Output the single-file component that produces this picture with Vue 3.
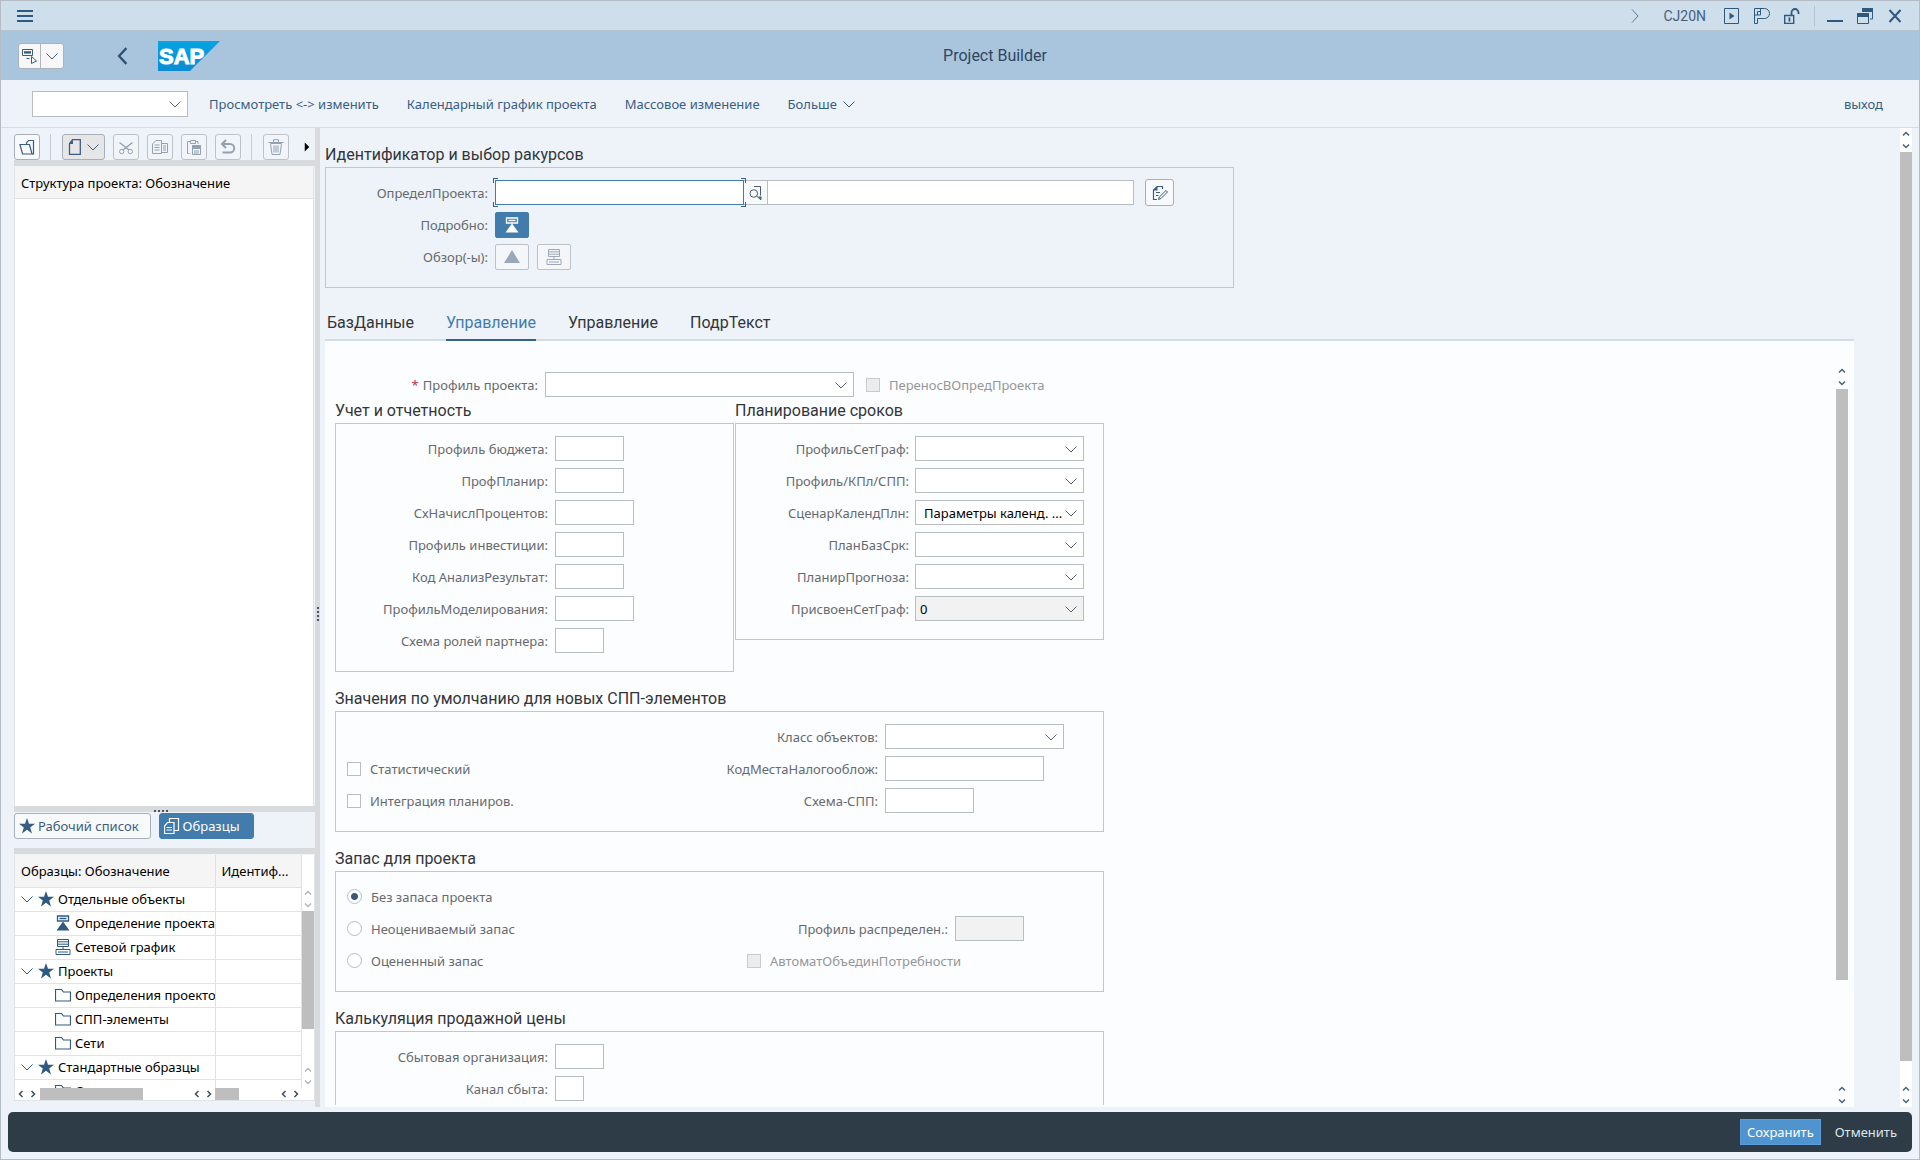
<script setup>
import { h, ref } from 'vue'

const S = (d, w = 1) => ({ d, fill: 'none', stroke: 'currentColor', 'stroke-width': w })
const F = (d) => ({ d, fill: 'currentColor' })

const icons = {
  menu: [F('M0 2h16v2H0zM0 7h16v2H0zM0 12h16v2H0z')],
  down: [S('M2.5 5.5L8 11l5.500-5.500')],
  right: [S('M5 1.500L11 8l-6 6.500')],
  back: [S('M11 1L4.500 8l6.500 7', 2)],
  cursor: [S('M.5 1.500h10v6H.5z'), F('M2 3.200h7v2.400H2z'), S('M4.500 10.500h3'), S('M9.500 8.500l5 4.500-5 2.500z')],
  play: [S('M.5 .5h14v15H.5z'), F('M5.500 4.500v7l5-3.500z')],
  pshape: [S('M3.500 15.500H.5V.5h10a4.800 4.800 0 010 10H8M6.500 .5v6.500M.5 7h6M3.500 15.500v-5h4.500M6.500 3.500h-3v3.500')],
  lock: [S('M.7 7.500h9v8h-9z', 1.4), S('M7.500 7.500V4.500a3.500 3.500 0 017 0V6', 1.8), F('M4.500 9.500h1.800v4H4.500z')],
  minimize: [F('M0 12h16v2H0z')],
  restore: [F('M5 0h11v4H5z'), S('M15.500 3v8H13'), S('M.5 6.500h11v9H.5z'), F('M0 5h12v4H0z')],
  close: [S('M2.500 2l11 12M13.500 2l-11 12', 2)],
  openFolder: [S('M1 5.500h9.500L13 15H3.500z', 1.2), S('M7.500 5.500V4l2-2.500h5V15H13', 1.2)],
  page: [S('M5.500 .7h7.800v14.600H2.500V4.500z', 1.300), F('M2.500 5L6 .7V5z')],
  cut: [S('M1.500 3.500l9.500 7.500M14.500 3.500L5 11', 1.500), S('M1.500 12.500a2.200 2.200 0 104.400 0 2.200 2.200 0 10-4.400 0M10.100 12.500a2.200 2.200 0 104.400 0 2.200 2.200 0 10-4.400 0')],
  copyDoc: [S('M4 1.500h5.500v13H.5V5z'), S('M2.500 6h5M2.500 8.500h5M2.500 11h5M9.500 4.500h6v9h-6M11 7h3M11 9h3M11 11h3')],
  paste: [S('M3.500 14.500h-2v-12h3M10 2.500h2V5M4.500 1.500h5v3h-5z'), S('M6.500 6.500h8v9h-8z'), F('M6.500 6h8v4h-8zM8 11.500h5v1H8zM8 13.500h5v1H8z')],
  undo: [S('M6 1L2 5l4 4M2 5h8a4 4 0 010 8.500H2.500', 2)],
  trash: [S('M2.500 4.500h11L12 15.500H4zM0.500 3.500h15M5.500 3V.7h5V3M6 6.500v7M8 6.500v7M10 6.500v7')],
  triangle: [F('M8 1l8 13H0z')],
  project: [S('M2.500 1h11v5h-11zM4.500 3.500h7', 1.300), F('M8 6.500l6.500 9h-13z')],
  network: [S('M2.500 .5h11v7h-11zM2.500 2.800h11M2.500 5.200h11M8 7.500v3M1 10.500h14v5H1zM3 13h10')],
  help: [S('M2 8.500a3.800 3.800 0 107.600 0 3.800 3.800 0 10-7.600 0M8.800 11.200L13 15M6 1.500h6.500v9'), F('M10 11.500h3.500V15z')],
  edit: [S('M10.500 4V1.500H5L1.500 5v9.500h3.500M4 7.500h4M4 10.500h2.500', 1.200), F('M1.500 5.500L5.500 1v4.500z'), S('M14 5.500l1.500 1.500-6.500 6.500-2.500 1 .8-2.500z')],
  star: [F('M8 0l2 5.700h6l-4.800 3.700 1.800 6.100-5-3.700-5 3.700 1.800-6.100L0 5.700h6z')],
  folder: [S('M.5 2.500h6l2 2.500h7v9H.5z', 1.200)],
  copy: [S('M3.500 4.500H10v11H.5V8zM2.500 9.500h5.500M2.500 12h5.500M5.500 4.500V.5h9v12H10', 1.200)],
  up: [S('M4 10l4-4 4 4', 2)],
  dn: [S('M4 6l4 4 4-4', 2)],
  lt: [S('M10 4L6 8l4 4', 2)],
  rt: [S('M6 4l4 4-4 4', 2)],
  caret: [F('M5 2l6 6-6 6z')]
}
const Icon = (p) =>
  h('svg', { viewBox: '0 0 16 16', width: p.size || 16, height: p.size || 16, class: 'icon', 'aria-hidden': 'true' },
    icons[p.name].map((a) => h('path', a)))
Icon.props = ['name', 'size']

const account = [
  ['Профиль бюджета:', 'w70'],
  ['ПрофПланир:', 'w70'],
  ['СхНачислПроцентов:', 'w80'],
  ['Профиль инвестиции:', 'w70'],
  ['Код АнализРезультат:', 'w70'],
  ['ПрофильМоделирования:', 'w80'],
  ['Схема ролей партнера:', 'w50']
]
const dates = [
  { label: 'ПрофильСетГраф:', value: '' },
  { label: 'Профиль/КПл/СПП:', value: '' },
  { label: 'СценарКалендПлн:', value: 'Параметры календ. ...', cls: 'indent' },
  { label: 'ПланБазСрк:', value: '' },
  { label: 'ПланирПрогноза:', value: '' },
  { label: 'ПрисвоенСетГраф:', value: '0', cls: 'off', disabled: true }
]
const tree = [
  ['Отдельные объекты', 'star', 0],
  ['Определение проекта', 'project', 1],
  ['Сетевой график', 'network', 1],
  ['Проекты', 'star', 0],
  ['Определения проекто', 'folder', 1],
  ['СПП-элементы', 'folder', 1],
  ['Сети', 'folder', 1],
  ['Стандартные образцы', 'star', 0],
  ['Стандартные сети', 'folder', 1]
]
const tools = [['cut', 'Вырезать'], ['copyDoc', 'Копировать'], ['paste', 'Вставить'], ['undo', 'Отменить действие']]
const tabs = ['БазДанные', 'Управление', 'Управление', 'ПодрТекст']
const activeTab = ref(1)
const stock = ref('none')
</script>

<template>
  <div class="app">
    <header class="sysbar">
      <button class="ib" aria-label="Меню"><Icon name="menu" /></button>
      <div class="sys">
        <Icon name="right" class="soft" />
        <span class="tcode">CJ20N</span>
        <button class="ib" aria-label="Выполнить"><Icon name="play" /></button>
        <button class="ib" aria-label="Персонализация"><Icon name="pshape" /></button>
        <button class="ib" aria-label="Блокировка"><Icon name="lock" /></button>
        <i class="vline"></i>
        <button class="ib" aria-label="Свернуть"><Icon name="minimize" /></button>
        <button class="ib" aria-label="Восстановить"><Icon name="restore" /></button>
        <button class="ib" aria-label="Закрыть"><Icon name="close" /></button>
      </div>
    </header>

    <div class="titlebar">
      <div class="split">
        <button aria-label="Курсор"><Icon name="cursor" /></button>
        <button aria-label="Варианты"><Icon name="down" /></button>
      </div>
      <button class="ib back" aria-label="Назад"><Icon name="back" :size="18" /></button>
      <svg class="logo" viewBox="0 0 62 30" width="62" height="30" role="img" aria-label="SAP">
        <defs>
          <linearGradient id="sapg" x1="0" y1="0" x2="0" y2="1">
            <stop offset="0" stop-color="#04a4e4" /><stop offset="1" stop-color="#0b8bd2" />
          </linearGradient>
        </defs>
        <path d="M0 0h62L32 30H0z" fill="url(#sapg)" />
        <text x="1" y="23" class="logotext">SAP</text>
      </svg>
      <h1>Project Builder</h1>
    </div>

    <nav class="menubar">
      <span class="sel cmd"><select aria-label="Команда"><option></option></select><Icon name="down" /></span>
      <a href="#">Просмотреть &lt;-&gt; изменить</a>
      <a href="#">Календарный график проекта</a>
      <a href="#">Массовое изменение</a>
      <a href="#" class="more">Больше <Icon name="down" /></a>
      <a href="#" class="exit">выход</a>
    </nav>

    <div class="work">
      <aside class="side">
        <div class="tools">
          <button class="tb" aria-label="Открыть"><Icon name="openFolder" /></button>
          <i class="sep"></i>
          <button class="tb wide" aria-label="Создать"><Icon name="page" /><Icon name="down" /></button>
          <button v-for="t in tools" :key="t[0]" class="tb" disabled :aria-label="t[1]"><Icon :name="t[0]" /></button>
          <i class="sep"></i>
          <button class="tb" disabled aria-label="Удалить"><Icon name="trash" /></button>
          <Icon name="caret" class="caret" :size="12" />
        </div>
        <div class="hsplit"></div>
        <div class="structure"><div class="colhead">Структура проекта: Обозначение</div></div>
        <div class="hsplit"><i v-for="n in 4" :key="n" class="dot"></i></div>
        <div class="switch">
          <button class="sw"><Icon name="star" />Рабочий список</button>
          <button class="sw on"><Icon name="copy" />Образцы</button>
        </div>
        <div class="hsplit"></div>
        <div class="samples">
          <div class="samplegrid">
            <div class="clip">
              <table>
                <colgroup><col class="c1"><col></colgroup>
                <thead><tr><th>Образцы: Обозначение</th><th>Идентиф...</th></tr></thead>
                <tbody>
                  <tr v-for="r in tree" :key="r[0]">
                    <td>
                      <div class="node" :class="{ leaf: r[2] }">
                        <Icon v-if="!r[2]" name="down" class="soft" /><Icon :name="r[1]" /><span>{{ r[0] }}</span>
                      </div>
                    </td>
                    <td></td>
                  </tr>
                </tbody>
              </table>
            </div>
            <div class="hbars" aria-hidden="true">
              <div class="hb first"><Icon name="lt" :size="12" /><Icon name="rt" :size="12" /><i class="ht"></i><Icon name="lt" :size="12" class="end" /><Icon name="rt" :size="12" /></div>
              <div class="hb"><i class="ht short"></i><Icon name="lt" :size="12" class="end" /><Icon name="rt" :size="12" /></div>
            </div>
          </div>
          <div class="vbar pale" aria-hidden="true">
            <Icon name="up" :size="12" /><Icon name="dn" :size="12" />
            <i class="thumb t1"></i><i class="rest r1"></i>
            <Icon name="up" :size="12" /><Icon name="dn" :size="12" />
          </div>
        </div>
      </aside>
      <div class="vsplit"><i v-for="n in 4" :key="n" class="dot"></i></div>

      <main class="main">
        <section class="content">
          <h2>Идентификатор и выбор ракурсов</h2>
          <div class="box ident">
            <div class="row">
              <label for="pd">ОпределПроекта:</label>
              <span class="focus"><input id="pd" type="text"><i class="k tl"></i><i class="k tr"></i><i class="k bl"></i><i class="k br"></i></span>
              <button class="f4" aria-label="Поиск"><Icon name="help" /></button>
              <input class="desc" type="text" aria-label="Обозначение проекта">
              <button class="tb editbtn" aria-label="Подробный текст"><Icon name="edit" /></button>
            </div>
            <div class="row">
              <span class="lab">Подробно:</span>
              <button class="vb on" aria-label="Определение проекта"><Icon name="project" /></button>
            </div>
            <div class="row">
              <span class="lab">Обзор(-ы):</span>
              <button class="vb" disabled aria-label="СПП-элементы"><Icon name="triangle" /></button>
              <button class="vb" disabled aria-label="Сети"><Icon name="network" /></button>
            </div>
          </div>

          <div class="tabs" role="tablist">
            <button v-for="(t, i) in tabs" :key="i" role="tab" :aria-selected="i === activeTab" :class="{ on: i === activeTab }" @click="activeTab = i">{{ t }}</button>
          </div>

          <div class="panel">
            <div class="form">
              <div class="row profile">
                <label for="pp"><b>*</b>Профиль проекта:</label>
                <span class="sel w310"><select id="pp"><option></option></select><Icon name="down" /></span>
                <label class="check dim"><input type="checkbox" disabled>ПереносВОпредПроекта</label>
              </div>
              <div class="pair">
                <div class="acc">
                  <h2>Учет и отчетность</h2>
                  <div class="box">
                    <div v-for="(f, i) in account" :key="i" class="row"><label :for="'a' + i">{{ f[0] }}</label><input :id="'a' + i" type="text" :class="f[1]"></div>
                  </div>
                </div>
                <div class="dat">
                  <h2>Планирование сроков</h2>
                  <div class="box">
                    <div v-for="(f, i) in dates" :key="i" class="row">
                      <label :for="'d' + i">{{ f.label }}</label>
                      <span class="sel w170" :class="f.cls"><select :id="'d' + i" :disabled="f.disabled"><option>{{ f.value }}</option></select><Icon name="down" /></span>
                    </div>
                  </div>
                </div>
              </div>

              <h2 class="gap">Значения по умолчанию для новых СПП-элементов</h2>
              <div class="box full defaults">
                <div class="row"><div class="cell"></div><label for="oc">Класс объектов:</label><span class="sel w180"><select id="oc"><option></option></select><Icon name="down" /></span></div>
                <div class="row"><div class="cell"><label class="check"><input type="checkbox">Статистический</label></div><label for="tx">КодМестаНалогооблож:</label><input id="tx" type="text" class="w160"></div>
                <div class="row"><div class="cell"><label class="check"><input type="checkbox">Интеграция планиров.</label></div><label for="ws">Схема-СПП:</label><input id="ws" type="text" class="w90"></div>
              </div>

              <h2 class="gap">Запас для проекта</h2>
              <div class="box full stock">
                <div class="row"><div class="cell"><label class="check"><input v-model="stock" type="radio" name="stock" value="none">Без запаса проекта</label></div></div>
                <div class="row"><div class="cell"><label class="check"><input v-model="stock" type="radio" name="stock" value="nonval">Неоцениваемый запас</label></div><label for="dp">Профиль распределен.:</label><input id="dp" type="text" class="w70" disabled></div>
                <div class="row"><div class="cell"><label class="check"><input v-model="stock" type="radio" name="stock" value="val">Оцененный запас</label></div><label class="check dim auto"><input type="checkbox" disabled>АвтоматОбъединПотребности</label></div>
              </div>

              <h2 class="gap">Калькуляция продажной цены</h2>
              <div class="box full acc">
                <div class="row"><label for="so">Сбытовая организация:</label><input id="so" type="text" class="w50"></div>
                <div class="row"><label for="dc">Канал сбыта:</label><input id="dc" type="text" class="w30"></div>
              </div>
            </div>
            <div class="vbar inner" aria-hidden="true">
              <Icon name="up" :size="12" /><Icon name="dn" :size="12" />
              <i class="thumb t2"></i><i class="rest r2"></i>
              <Icon name="up" :size="12" /><Icon name="dn" :size="12" />
            </div>
          </div>
        </section>
        <div class="vbar outer" aria-hidden="true">
          <Icon name="up" :size="12" /><Icon name="dn" :size="12" />
          <i class="thumb t3"></i><i class="rest r3"></i>
          <Icon name="up" :size="12" /><Icon name="dn" :size="12" />
        </div>
      </main>
    </div>

    <footer class="footer">
      <button class="save">Сохранить</button>
      <button class="cancel">Отменить</button>
    </footer>
  </div>
</template>

<style>
body { background: #edf3f8; }
</style>

<style scoped>
.app, .app * { box-sizing: border-box; }
.app { height: 100vh; display: flex; flex-direction: column; border: 1px solid #b4bcc6; background: #edf3f8; font-family: "Noto Sans", sans-serif; font-size: 13px; line-height: 20px; color: #32363a; overflow: hidden; }
button, input, select { font: inherit; color: inherit; margin: 0; padding: 0; border: 0; background: none; border-radius: 0; outline: none; }
.icon { display: block; flex: none; }
i { display: block; flex: none; }
a { color: #3a5d84; text-decoration: none; }
h1, h2 { margin: 0; font-family: Roboto, "Noto Sans", sans-serif; font-weight: 400; font-size: 16px; line-height: 24px; }
.soft { color: #5d7c98; }

.sysbar { height: 30px; flex: none; display: flex; align-items: center; justify-content: space-between; padding: 0 16px; background: #cedeeb; border-bottom: 1px solid #b6c4d0; color: #2f5a80; }
.ib { display: flex; color: #2f5a80; }
.sys { display: flex; align-items: center; }
.tcode { font-family: Roboto, "Noto Sans", sans-serif; font-size: 14px; margin: 0 18px 0 20px; color: #46617f; }
.sys .ib { margin-right: 14px; }
.sys .vline { width: 1px; height: 20px; background: #b3c2cf; margin-right: 12px; }
.sys .ib:last-child { margin-right: 0; }

.titlebar { height: 49px; flex: none; display: flex; align-items: center; background: #a9c5de; padding: 0 17px; }
.split { display: flex; height: 26px; border: 1px solid #a9b3bc; border-radius: 3px; background: #f7f7f7; color: #3a5d84; }
.split button { width: 21px; display: flex; align-items: center; justify-content: center; }
.split button + button { border-left: 1px solid #b5b5b5; width: 23px; }
.back { margin-left: 50px; color: #2f4f70; }
.logo { margin-left: 26px; }
.logotext { font: 700 22px "Liberation Sans", sans-serif; fill: #fff; stroke: #fff; stroke-width: 1; }
h1 { flex: 1; text-align: center; color: #2f4560; padding-right: 132px; }

.menubar { height: 48px; flex: none; display: flex; align-items: center; gap: 28px; padding: 0 36px 0 31px; border-bottom: 1px solid #d3dbe3; }
.more { display: flex; align-items: center; gap: 4px; }
.exit { margin-left: auto; }

.sel { display: grid; height: 25px; border: 1px solid #b9bcc0; background: #fff; }
.sel select { grid-area: 1 / 1; width: 100%; height: 100%; appearance: none; color: #000; padding-left: 4px; }
.sel .icon { grid-area: 1 / 1; justify-self: end; align-self: center; margin-right: 4px; pointer-events: none; color: #5b6672; }
.sel.indent select { padding-left: 8px; }
.sel.off { background: #f2f2f2; }
.sel.off select { opacity: 1; }
.cmd { width: 156px; height: 26px; margin-right: -7px; }

.work { flex: 1; min-height: 0; display: flex; }
.side { width: 301px; margin-left: 13px; flex: none; display: flex; flex-direction: column; padding-bottom: 11px; }
.tools { height: 32px; flex: none; display: flex; align-items: flex-end; gap: 8px; }
.tb { width: 26px; height: 26px; display: flex; align-items: center; justify-content: center; border: 1px solid #a9afb6; border-radius: 3px; background: #f7f9fb; color: #3a5d84; }
.tb.wide { width: 43px; gap: 2px; background: #e6e6e6; }
.tb:disabled { color: #93a2b1; border-color: #bcc2c8; background: #f1f4f8; }
.sep { width: 1px; height: 26px; background: #c5ccd3; margin: 0 3px 0 2px; }
.caret { align-self: center; color: #000; margin: 6px 0 0 4px; }
.hsplit { height: 6px; flex: none; background: #d9dadc; display: flex; justify-content: center; align-items: flex-end; gap: 2px; padding-right: 7px; margin-bottom: 1px; }
.dot { width: 2px; height: 2px; background: #4a5560; }
.structure { flex: 1; background: #fff; width: 300px; border: 1px solid #e0e2e4; border-top: 0; border-bottom: 0; }
.colhead { height: 32px; line-height: 32px; padding-left: 6px; background: #f5f5f6; border-bottom: 1px solid #e0e0e0; color: #000; }
.switch { display: flex; gap: 8px; height: 35px; flex: none; align-items: flex-start; }
.sw { height: 26px; display: flex; align-items: center; gap: 3px; border: 1px solid #a9afb6; border-radius: 3px; background: #f7f9fb; color: #3a5d84; padding: 0 11px 0 4px; }
.sw.on { background: #427cac; border-color: #427cac; color: #fff; padding-right: 13px; }

.samples { display: flex; height: 246px; flex: none; border: 1px solid #e0e2e4; border-top: 0; }
.samplegrid { flex: 1; min-width: 0; display: flex; flex-direction: column; background: #fff; }
.clip { height: 233px; overflow: hidden; }
table { width: 100%; table-layout: fixed; border-collapse: collapse; color: #000; }
.c1 { width: 200px; }
th { height: 32px; padding: 0 0 0 6px; font-weight: 400; text-align: left; background: #f5f5f6; }
th, td { border-bottom: 1px solid #e3e3e3; border-right: 1px solid #e0e0e0; overflow: hidden; white-space: nowrap; }
td { height: 24px; padding: 0; }
.node { display: flex; align-items: center; gap: 3px; padding-left: 4px; height: 23px; overflow: hidden; }
.node .icon + span { margin-left: 1px; }
.node.leaf { padding-left: 40px; }
.node .icon { color: #2f5a80; }
.hbars { display: flex; height: 12px; color: #3a4c60; }
.hb { display: flex; flex: 1; }
.hb.first { width: 200px; flex: none; }
.ht { width: 103px; height: 12px; background: #bebebe; }
.ht.short { width: 24px; }
.hb .end { margin-left: auto; }
.hb.first .ht { margin-left: 1px; }

.vbar { width: 12px; flex: none; display: flex; flex-direction: column; background: #fff; color: #4a617c; }
.thumb { background: #bebebe; }
.rest { flex: 1; }
.pale { color: #b5b5b5; padding: 32px 0 12px; }
.t1 { flex: 117 0 0; }
.r1 { flex: 35 0 0; }
.inner { margin: 24px 6px 0 0; background: transparent; }
.t2 { flex: 590 0 0; }
.r2 { flex: 103 0 0; }
.t3 { flex: 908 0 0; }
.r3 { flex: 22 0 0; }

.vsplit { width: 5px; height: calc(100% - 5px); flex: none; background: #d9dadc; display: flex; flex-direction: column; align-items: center; justify-content: center; gap: 2px; padding-bottom: 8px; }

.main { flex: 1; min-width: 0; display: flex; padding: 0 7px 5px 0; }
.content { flex: 1; min-width: 0; display: flex; flex-direction: column; padding: 15px 46px 0 5px; }
h2 { white-space: nowrap; }
.box { border: 1px solid #c3c7cc; padding: 12px 0 18px; display: flex; flex-direction: column; gap: 7px; }
.row { display: flex; align-items: center; height: 25px; color: #666a6e; white-space: nowrap; }
.row > label, .row > .lab { text-align: right; flex: none; }
input[type="text"] { height: 25px; border: 1px solid #b9bcc0; background: #fff; }
input[type="text"]:disabled { background: #f2f2f2; }
.ident { width: 909px; flex: none; }
.ident .row > label, .ident .lab { width: 162px; margin-right: 7px; }
.focus { position: relative; display: flex; }
.focus input { width: 249px; border-color: #427cac; }
.k { position: absolute; width: 5px; height: 5px; border: 0 solid #346187; }
.tl { left: -2px; top: -2px; border-width: 1px 0 0 1px; }
.tr { right: -2px; top: -2px; border-width: 1px 1px 0 0; }
.bl { left: -2px; bottom: -2px; border-width: 0 0 1px 1px; }
.br { right: -2px; bottom: -2px; border-width: 0 1px 1px 0; }
.f4 { width: 23px; height: 25px; border: 1px solid #b9bcc0; border-width: 1px 0; display: flex; align-items: center; justify-content: center; color: #4d5b6a; background: #f7f9fb; }
.desc { width: 367px; margin-right: 11px; }
.editbtn { width: 29px; height: 27px; }
.vb { width: 34px; height: 26px; border: 1px solid #bcc2c8; border-radius: 2px; background: #f4f6f9; color: #9aa9ba; display: flex; align-items: center; justify-content: center; margin-right: 8px; }
.vb.on { background: #427cac; border-color: #427cac; color: #fff; }

.tabs { display: flex; align-items: flex-end; gap: 32px; height: 53px; flex: none; padding-left: 2px; border-bottom: 2px solid #d3dde8; }
.tabs button { font-family: Roboto, "Noto Sans", sans-serif; font-size: 16px; line-height: 24px; padding-bottom: 4px; border-bottom: 2px solid transparent; margin-bottom: -2px; color: #32363a; }
.tabs .on { color: #427cac; border-color: #346187; }

.panel { flex: 1; min-height: 0; display: flex; background: #fcfdff; }
.form { flex: 1; min-width: 0; overflow: hidden; padding: 31px 0 0 10px; margin-bottom: 2px; }
.profile > label:first-child { width: 203px; margin-right: 7px; }
.profile b { color: #c03050; font-weight: 400; margin-right: 4px; }
.profile .check { margin-left: 12px; }
.check { display: flex; align-items: center; gap: 9px; }
.check input { appearance: none; width: 14px; height: 14px; border: 1px solid #b9bcc0; background: #fff; }
.check input:disabled { background: #ececee; border-color: #c8cacc; }
.check input[type="radio"] { width: 15px; height: 15px; border-radius: 50%; }
.check input[type="radio"]:checked { background: radial-gradient(circle, #3a5773 3px, #fff 4px); border-color: #a9c3da; }
.dim { color: #949799; }
.pair { display: flex; align-items: flex-start; padding-top: 2px; }
.pair .acc { width: 400px; }
.pair .acc .box { width: 399px; }
.pair .dat { width: 369px; }
.acc .row > label { width: 212px; margin-right: 7px; }
.dat .row > label { width: 173px; margin-right: 6px; }
.gap { margin-top: 15px; }
.full { width: 769px; }
.cell { width: 351px; padding-left: 11px; flex: none; }
.defaults .row > label { width: 191px; margin-right: 7px; }
.stock .row > label { width: 261px; margin-right: 7px; }
.stock .row > .auto { margin-left: 60px; }
.w30 { width: 29px; }
.w50 { width: 49px; }
.w70 { width: 69px; }
.w80 { width: 79px; }
.w90 { width: 89px; }
.w160 { width: 159px; }
.w170 { width: 169px; }
.w180 { width: 179px; }
.w310 { width: 309px; }

.footer { height: 40px; flex: none; margin: 0 7px 7px; background: #2e3c48; border-radius: 5px; display: flex; align-items: center; justify-content: flex-end; padding-right: 7px; color: #dbe6f0; }
.footer button { height: 26px; padding: 0 8px; }
.footer .save { background: #5094cf; color: #fff; border: 1px solid #5a9dd8; margin-right: 6px; padding: 0 6px; }
</style>
